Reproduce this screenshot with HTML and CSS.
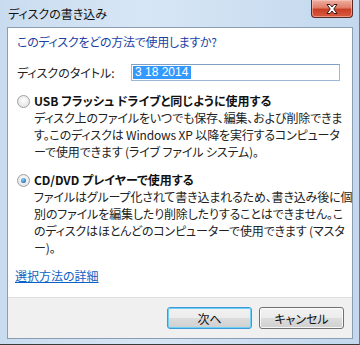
FILE: index.html
```html
<!DOCTYPE html>
<html lang="ja">
<head>
<meta charset="utf-8">
<link rel="stylesheet" href="styles.css">
</head>
<body>
<div class="window">
  <div class="titlebar">
    <span class="title">ディスクの書き込み</span>
    <button class="close" aria-label="閉じる">
      <svg width="16" height="12" viewBox="0 0 16 12">
        <path d="M3 1.5 L6 1.5 L8 4 L10 1.5 L13 1.5 L9.8 6 L13 10.5 L10 10.5 L8 8 L6 10.5 L3 10.5 L6.2 6 Z" fill="#fff" stroke="#3a1a1a" stroke-width="1" stroke-linejoin="round"/>
      </svg>
    </button>
  </div>
  <div class="client">
    <div class="main">
      <div class="heading">このディスクをどの方法で使用しますか?</div>
      <div class="title-row">
        <label class="field-label">ディスクのタイトル:</label>
        <div class="textbox"><span class="sel">3 18 2014</span></div>
      </div>
      <div class="option">
        <span class="radio"></span>
        <div class="opt-body">
          <div class="opt-label">USB フラッシュ ドライブと同じように使用する</div>
          <div class="opt-desc">ディスク上のファイルをいつでも保存、編集、および削除できま<br>す。このディスクは Windows XP 以降を実行するコンピュータ<br>ーで使用できます (ライブ ファイル システム)。</div>
        </div>
      </div>
      <div class="option">
        <span class="radio checked"></span>
        <div class="opt-body">
          <div class="opt-label">CD/DVD プレイヤーで使用する</div>
          <div class="opt-desc">ファイルはグループ化されて書き込まれるため、書き込み後に個<br>別のファイルを編集したり削除したりすることはできません。こ<br>のディスクはほとんどのコンピューターで使用できます (マスタ<br>ー)。</div>
        </div>
      </div>
      <a class="link" href="#">選択方法の詳細</a>
    </div>
    <div class="footer">
      <button class="btn default">次へ</button>
      <button class="btn">キャンセル</button>
    </div>
  </div>
</div>
</body>
</html>
```
FILE: styles.css
```css
html, body {
  margin: 0;
  padding: 0;
}
body {
  width: 360px;
  height: 345px;
  overflow: hidden;
  font-family: "Noto Sans CJK JP", "Noto Sans", sans-serif;
  font-size: 12px;
  font-feature-settings: "palt";
  color: #1e1e1e;
  background: #fff;
}
.window {
  width: 360px;
  height: 345px;
  box-sizing: border-box;
  background: linear-gradient(90deg, #c9dcef 0%, #d7e6f5 40%, #c3d8ee 100%);
  border-bottom: 1px solid #3a3a3a;
  border-right: 1px solid #6a7a8a;
  display: flex;
  flex-direction: column;
  padding: 0 6px 5px 7px;
}
.titlebar {
  height: 27px;
  display: flex;
  justify-content: space-between;
  align-items: flex-start;
  flex: none;
}
.title {
  margin-top: 5px;
  margin-left: 1px;
  line-height: 17px;
  color: #111;
}
.close {
  width: 42px;
  height: 18px;
  margin: 0;
  padding: 0;
  border: 1px solid #5a2a28;
  border-top: none;
  border-radius: 0 0 4px 4px;
  background: linear-gradient(180deg, #eeb0a2 0%, #e07e68 45%, #c93f26 55%, #d95a3f 100%);
  display: flex;
  align-items: center;
  justify-content: center;
  box-shadow: inset 0 0 0 1px rgba(255,210,200,0.5);
}
.client {
  flex: 1;
  display: flex;
  flex-direction: column;
  border: 1px solid #8a9db3;
  background: #fff;
}
.main {
  flex: 1;
  padding: 5px 9px 0 9px;
}
.heading {
  color: #1a3fa5;
  line-height: 17px;
  letter-spacing: -0.3px;
}
.title-row {
  display: flex;
  align-items: center;
  margin-top: 14px;
}
.field-label {
  width: 114px;
  color: #222;
}
.textbox {
  width: 205px;
  height: 15px;
  border: 1px solid #9ab8d6;
  border-top-color: #7f9fc2;
  padding: 0 1px;
  display: flex;
  align-items: center;
  font-family: "Liberation Sans", sans-serif;
  font-size: 12px;
}
.sel {
  background: #3399ff;
  color: #fff;
  padding: 0 2px;
  line-height: 13px;
  width: 54px;
}
.option {
  display: flex;
  align-items: flex-start;
  margin-top: 11px;
}
.option + .option {
  margin-top: 11px;
}
.radio {
  width: 11px;
  height: 11px;
  border-radius: 50%;
  border: 1px solid #a0a0a0;
  background: radial-gradient(circle at 50% 40%, #ffffff 0%, #e6e6e6 70%, #d4d4d4 100%);
  margin: 3px 4px 0 0;
  flex: none;
  position: relative;
}
.radio.checked::after {
  content: "";
  position: absolute;
  left: 3px;
  top: 3px;
  width: 5px;
  height: 5px;
  border-radius: 50%;
  background: radial-gradient(circle at 40% 35%, #8fd0f7 0%, #1f78c9 70%, #165e9e 100%);
}
.opt-label {
  font-weight: bold;
  line-height: 17px;
  color: #111;
}
.opt-desc {
  line-height: 17px;
  white-space: nowrap;
  color: #222;
  letter-spacing: -0.15px;
}
.link {
  display: inline-block;
  margin-top: 11px;
  color: #0b62c6;
  text-decoration: underline;
  line-height: 17px;
  margin-left: -2px;
}
.footer {
  height: 40px;
  flex: none;
  background: #f0f0f0;
  border-top: 1px solid #dfdfdf;
  display: flex;
  justify-content: flex-end;
  align-items: center;
  gap: 7px;
  padding-right: 8px;
}
.btn {
  width: 85px;
  height: 22px;
  margin: 0;
  padding: 0;
  font-family: inherit;
  font-size: 12px;
  font-feature-settings: "palt";
  color: #111;
  border: 1px solid #707070;
  border-radius: 3px;
  background: linear-gradient(180deg, #f2f2f2 0%, #ebebeb 50%, #dddddd 51%, #cfcfcf 100%);
  box-shadow: inset 0 0 0 1px rgba(255,255,255,0.8);
}
.btn.default {
  border-color: #3c9bd6;
  box-shadow: inset 0 0 0 1px #6fd0f5;
}
```
